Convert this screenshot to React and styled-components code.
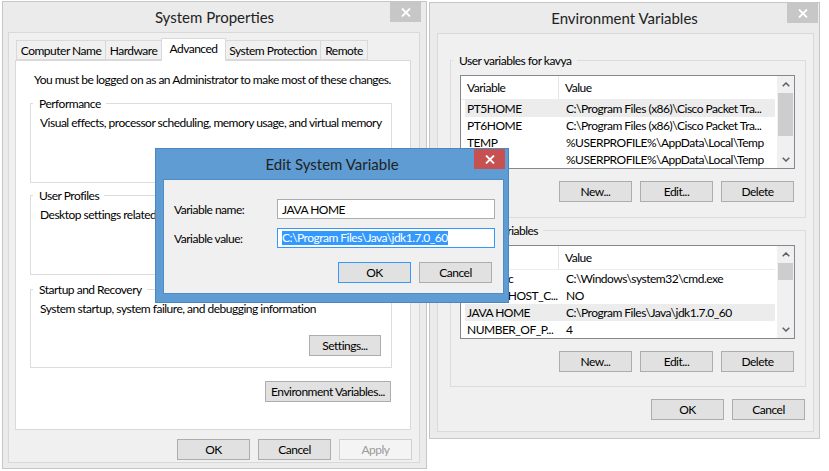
import React from "react";
import styled, { createGlobalStyle } from "styled-components";

const GlobalStyle = createGlobalStyle`
  html, body {
    margin: 0;
    padding: 0;
    background: #ffffff;
  }
  body {
    font-family: "Lato", "Liberation Sans", sans-serif;
    font-size: 12px;
    letter-spacing: -0.5px;
    color: #000000;
  }
  * {
    box-sizing: border-box;
  }
`;

const Desktop = styled.div`
  position: relative;
  width: 829px;
  height: 471px;
  overflow: hidden;
  background: #ffffff;
`;

// windows sit on a free desktop, so they are placed by coordinates
const Window = styled.div`
  position: absolute;
  left: ${(p) => p.$x}px;
  top: ${(p) => p.$y}px;
  width: ${(p) => p.$w}px;
  height: ${(p) => p.$h}px;
  display: flex;
  flex-direction: column;
  background: ${(p) => (p.$active ? "#5e9cd3" : "#ebebeb")};
  border: 1px solid ${(p) => (p.$active ? "#4a86c0" : "#c6c6c6")};
  z-index: ${(p) => (p.$active ? 2 : 1)};
`;

const TitleBar = styled.div`
  position: relative;
  flex: 0 0 30px;
  display: flex;
  align-items: center;
  justify-content: center;
  font-size: 15px;
  letter-spacing: 0;
  color: #222222;
`;

const CloseButton = styled.div`
  position: absolute;
  top: 0;
  right: ${(p) => p.$right}px;
  width: 31px;
  height: 20px;
  display: flex;
  align-items: center;
  justify-content: center;
  background: ${(p) => (p.$active ? "#c75050" : "#c7c7c7")};
`;

const Client = styled.div`
  flex: 1;
  margin: ${(p) => p.$margin};
  padding: ${(p) => p.$pad};
  background: #f0f0f0;
  border: 1px solid ${(p) => (p.$active ? "#4f8cc4" : "#d9d9d9")};
  display: flex;
  flex-direction: column;
`;

const TabStrip = styled.div`
  position: relative;
  z-index: 1;
  display: flex;
  align-items: flex-end;
  height: 23px;
  padding-left: 1px;
  margin-bottom: -1px;
`;

const Tab = styled.div`
  position: relative;
  z-index: ${(p) => (p.$active ? 1 : 0)};
  width: ${(p) => p.$w}px;
  height: ${(p) => (p.$active ? 23 : 20)}px;
  margin-left: -1px;
  margin-bottom: ${(p) => (p.$active ? 0 : 1)}px;
  border: 1px solid #d9d9d9;
  border-bottom: ${(p) => (p.$active ? "none" : "1px solid #d9d9d9")};
  background: ${(p) => (p.$active ? "#ffffff" : "#f0f0f0")};
  display: flex;
  align-items: center;
  justify-content: center;
  padding-bottom: ${(p) => (p.$active ? 3 : 0)}px;
  white-space: nowrap;

  &:first-child {
    margin-left: 0;
  }
`;

const TabPanel = styled.div`
  flex: 0 0 370px;
  background: #ffffff;
  border: 1px solid #d9d9d9;
  padding: 11px 18px 0 14px;
  display: flex;
  flex-direction: column;
`;

const Note = styled.div`
  margin-left: 4px;
  line-height: 16px;
  white-space: nowrap;
`;

const GroupBox = styled.fieldset`
  margin: ${(p) => p.$mt || 0}px 0 0;
  height: ${(p) => p.$h}px;
  padding: 0 10px 0 9px;
  border: 1px solid #dcdcdc;
  min-width: 0;
  display: flex;
  flex-direction: column;
`;

const Legend = styled.legend`
  margin-left: -7px;
  padding: 0 5px 0 6px;
  line-height: 15px;
  font-size: 12px;
  white-space: nowrap;
`;

const GroupText = styled.div`
  margin-top: 4px;
  line-height: 16px;
  white-space: nowrap;
`;

const ButtonRow = styled.div`
  display: flex;
  justify-content: flex-end;
  gap: 8px;
  margin-top: ${(p) => p.$mt || 0}px;
  margin-right: ${(p) => p.$mr || 0}px;
`;

const Button = styled.div`
  width: ${(p) => p.$w || 73}px;
  height: 21px;
  display: flex;
  align-items: center;
  justify-content: center;
  white-space: nowrap;
  background: ${(p) => (p.$disabled ? "#f4f4f4" : "#e1e1e1")};
  border: 1px solid
    ${(p) => (p.$default ? "#3399ff" : p.$disabled ? "#d0d0d0" : "#adadad")};
  color: ${(p) => (p.$disabled ? "#9a9a9a" : "#000000")};
  align-self: ${(p) => (p.$end ? "flex-end" : "auto")};
  margin-top: ${(p) => p.$mt || 0}px;
`;

const ListView = styled.div`
  margin-top: 7px;
  height: 94px;
  border: 1px solid #828790;
  background: #ffffff;
  display: flex;
`;

const ListBody = styled.div`
  flex: 1;
  display: flex;
  flex-direction: column;
  overflow: hidden;
`;

const ListHeader = styled.div`
  display: flex;
  width: 314px;
  height: 25px;
  border-bottom: 1px solid #ececec;
`;

const HeaderCell = styled.div`
  width: ${(p) => (p.$w ? `${p.$w}px` : "auto")};
  flex: ${(p) => (p.$w ? "0 0 auto" : "1")};
  padding-left: 6px;
  display: flex;
  align-items: center;
  border-right: ${(p) => (p.$w ? "1px solid #e5e5e5" : "none")};
`;

const Rows = styled.div`
  padding-left: 4px;
`;

const Row = styled.div`
  width: 310px;
  height: 17px;
  display: flex;
  align-items: center;
  background: ${(p) => (p.$selected ? "#ececec" : "transparent")};
  white-space: nowrap;
`;

const Cell = styled.div`
  width: ${(p) => (p.$w ? `${p.$w}px` : "auto")};
  flex: ${(p) => (p.$w ? "0 0 auto" : "1")};
  padding-left: 2px;
  overflow: hidden;
`;

const ScrollBar = styled.div`
  flex: 0 0 17px;
  background: #f0f0f0;
  display: flex;
  flex-direction: column;
`;

const ScrollArrow = styled.div`
  height: 17px;
  display: flex;
  align-items: center;
  justify-content: center;
`;

const Thumb = styled.div`
  margin: 0 1px;
  height: ${(p) => p.$h}px;
  background: #cdcdcd;
`;

const Track = styled.div`
  flex: 1;
`;

const FieldGrid = styled.div`
  display: grid;
  grid-template-columns: 103px 218px;
  row-gap: 9px;
  align-items: center;
`;

const TextBox = styled.div`
  height: 20px;
  background: #ffffff;
  border: 1px solid ${(p) => (p.$focused ? "#3399ff" : "#abadb3")};
  padding-left: 4px;
  display: flex;
  align-items: center;
  white-space: nowrap;
`;

const Selection = styled.span`
  background: #3399ff;
  color: #ffffff;
  line-height: 14px;
`;

const CloseGlyph = () => (
  <svg width="10" height="9" viewBox="0 0 10 9">
    <path d="M1 0.5 L9 8.5 M9 0.5 L1 8.5" stroke="#ffffff" strokeWidth="1.8" />
  </svg>
);

const Chevron = ({ down }) => (
  <svg width="8" height="5" viewBox="0 0 8 5">
    <polyline
      points={down ? "0.7,0.7 4,4 7.3,0.7" : "0.7,4.3 4,1 7.3,4.3"}
      fill="none"
      stroke="#606060"
      strokeWidth="1.5"
    />
  </svg>
);

const VarList = ({ rows, thumb }) => (
  <ListView>
    <ListBody>
      <ListHeader>
        <HeaderCell $w={98}>Variable</HeaderCell>
        <HeaderCell>Value</HeaderCell>
      </ListHeader>
      <Rows>
        {rows.map(([name, value, selected]) => (
          <Row key={name} $selected={selected}>
            <Cell $w={99}>{name}</Cell>
            <Cell>{value}</Cell>
          </Row>
        ))}
      </Rows>
    </ListBody>
    <ScrollBar>
      <ScrollArrow>
        <Chevron />
      </ScrollArrow>
      <Thumb $h={thumb} />
      <Track />
      <ScrollArrow>
        <Chevron down />
      </ScrollArrow>
    </ScrollBar>
  </ListView>
);

const tabs = [
  ["Computer Name", 90],
  ["Hardware", 57],
  ["Advanced", 65, true],
  ["System Protection", 96],
  ["Remote", 48],
];

const userVars = [
  ["PT5HOME", "C:\\Program Files (x86)\\Cisco Packet Tra...", true],
  ["PT6HOME", "C:\\Program Files (x86)\\Cisco Packet Tra..."],
  ["TEMP", "%USERPROFILE%\\AppData\\Local\\Temp"],
  ["TMP", "%USERPROFILE%\\AppData\\Local\\Temp"],
];

const systemVars = [
  ["ComSpec", "C:\\Windows\\system32\\cmd.exe"],
  ["FP_NO_HOST_C...", "NO"],
  ["JAVA HOME", "C:\\Program Files\\Java\\jdk1.7.0_60", true],
  ["NUMBER_OF_P...", "4"],
];

const SystemProperties = () => (
  <Window $x={2} $y={1} $w={425} $h={468}>
    <TitleBar>
      System Properties
      <CloseButton $right={5}>
        <CloseGlyph />
      </CloseButton>
    </TitleBar>
    <Client $margin="0 6px 5px 5px" $pad="5px 8px 0 6px">
      <TabStrip>
        {tabs.map(([label, w, active]) => (
          <Tab key={label} $w={w} $active={active}>
            {label}
          </Tab>
        ))}
      </TabStrip>
      <TabPanel>
        <Note>
          You must be logged on as an Administrator to make most of these
          changes.
        </Note>
        <GroupBox $mt={8} $h={87}>
          <Legend>Performance</Legend>
          <GroupText>
            Visual effects, processor scheduling, memory usage, and virtual
            memory
          </GroupText>
        </GroupBox>
        <GroupBox $mt={5} $h={87}>
          <Legend>User Profiles</Legend>
          <GroupText>Desktop settings related to your sign-in</GroupText>
        </GroupBox>
        <GroupBox $mt={7} $h={86}>
          <Legend>Startup and Recovery</Legend>
          <GroupText>
            System startup, system failure, and debugging information
          </GroupText>
          <Button $w={72} $end $mt={18}>
            Settings...
          </Button>
        </GroupBox>
        <ButtonRow $mt={13} $mr={1}>
          <Button $w={126}>Environment Variables...</Button>
        </ButtonRow>
      </TabPanel>
      <ButtonRow $mt={9} $mr={-1}>
        <Button>OK</Button>
        <Button>Cancel</Button>
        <Button $disabled>Apply</Button>
      </ButtonRow>
    </Client>
  </Window>
);

const EnvironmentVariables = () => (
  <Window $x={429} $y={2} $w={391} $h={437}>
    <TitleBar>
      Environment Variables
      <CloseButton $right={1}>
        <CloseGlyph />
      </CloseButton>
    </TitleBar>
    <Client $margin="0 5px 6px 7px" $pad="19px 7px 0 12px">
      <GroupBox $h={165}>
        <Legend>User variables for kavya</Legend>
        <VarList rows={userVars} thumb={43} />
        <ButtonRow $mt={12} $mr={1}>
          <Button>New...</Button>
          <Button>Edit...</Button>
          <Button>Delete</Button>
        </ButtonRow>
      </GroupBox>
      <GroupBox $mt={5} $h={164}>
        <Legend>System variables</Legend>
        <VarList rows={systemVars} thumb={17} />
        <ButtonRow $mt={12} $mr={1}>
          <Button>New...</Button>
          <Button>Edit...</Button>
          <Button>Delete</Button>
        </ButtonRow>
      </GroupBox>
      <ButtonRow $mt={12} $mr={1}>
        <Button>OK</Button>
        <Button>Cancel</Button>
      </ButtonRow>
    </Client>
  </Window>
);

const EditSystemVariable = () => (
  <Window $x={155} $y={148} $w={354} $h={155} $active>
    <TitleBar>
      Edit System Variable
      <CloseButton $right={3} $active>
        <CloseGlyph />
      </CloseButton>
    </TitleBar>
    <Client $margin="0 4px 8px 7px" $pad="19px 9px 0 10px" $active>
      <FieldGrid>
        <span>Variable name:</span>
        <TextBox>JAVA HOME</TextBox>
        <span>Variable value:</span>
        <TextBox $focused>
          <Selection>C:\Program Files\Java\jdk1.7.0_60</Selection>
        </TextBox>
      </FieldGrid>
      <ButtonRow $mt={14} $mr={2}>
        <Button $default>OK</Button>
        <Button>Cancel</Button>
      </ButtonRow>
    </Client>
  </Window>
);

const App = () => (
  <>
    <GlobalStyle />
    <Desktop>
      <SystemProperties />
      <EnvironmentVariables />
      <EditSystemVariable />
    </Desktop>
  </>
);

export default App;
